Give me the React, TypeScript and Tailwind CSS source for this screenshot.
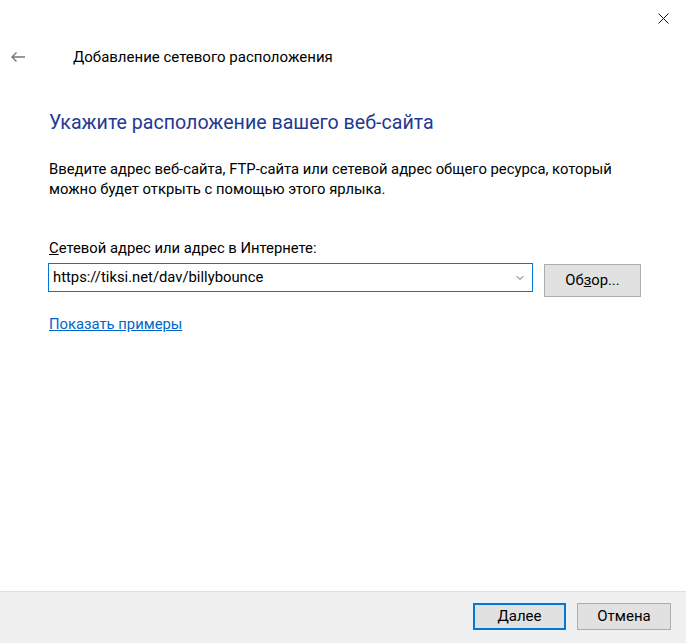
import { ChevronDown } from 'lucide-react';

function App() {
  return (
    <div className="relative flex h-[643px] w-[686px] flex-col bg-white font-['Roboto',sans-serif] text-black">
      <div className="flex h-9 justify-end">
        <div className="flex h-9 w-[46px] items-center justify-center">
          <svg width="11" height="11" viewBox="0 0 11 11" stroke="#111" strokeWidth="1">
            <path d="M0.5 0.5 L10.5 10.5 M10.5 0.5 L0.5 10.5" />
          </svg>
        </div>
      </div>

      <div className="flex h-[42px] items-center">
        <div className="ml-[10px] flex w-[63px] items-center">
          <svg width="16" height="12" viewBox="0 0 16 12" stroke="#777" strokeWidth="1.4" fill="none">
            <path d="M15 6 H2 M6.5 1.5 L2 6 L6.5 10.5" />
          </svg>
        </div>
        <span className="text-[15px] leading-5">Добавление сетевого расположения</span>
      </div>

      <div className="flex flex-col pl-[49px]">
        <h1 className="mt-[31px] text-[19.6px] leading-7 text-[#1f3a93]">
          Укажите расположение вашего веб-сайта
        </h1>
        <p className="mt-[22px] text-[14.8px] leading-5">
          Введите адрес веб-сайта, FTP-сайта или сетевой адрес общего ресурса, который
          <br />
          можно будет открыть с помощью этого ярлыка.
        </p>
        <div className="mt-[39px] text-[14.8px] leading-5">
          <span className="underline">С</span>етевой адрес или адрес в Интернете:
        </div>
        <div className="mt-[5px] flex h-[34px] items-start">
          <div className="-ml-px flex h-[29px] w-[485px] items-center border border-[#0078d7] pl-[4px] pr-[6px]">
            <span className="flex-1 text-[14.8px]">https://tiksi.net/dav/billybounce</span>
            <ChevronDown size={12} strokeWidth={1.6} color="#333" />
          </div>
          <button className="ml-[11px] mt-px h-[33px] w-[97px] border border-[#adadad] bg-[#e1e1e1] text-[14.8px]">
            Об<span className="underline">з</span>ор...
          </button>
        </div>
        <a className="mt-[17px] w-fit text-[14.8px] leading-5 text-[#0066cc] underline">Показать примеры</a>
      </div>

      <div className="flex-1" />

      <div className="flex h-[52px] justify-end gap-[11px] border-t border-[#dfdfdf] bg-[#f0f0f0] pr-[15px] pt-[11px]">
        <button className="h-[27px] w-[93px] border-2 border-[#0078d7] bg-[#e1e1e1] text-[15px]">
          <span className="underline">Д</span>алее
        </button>
        <button className="h-[27px] w-[94px] border border-[#adadad] bg-[#e1e1e1] text-[15px]">
          Отмена
        </button>
      </div>
    </div>
  );
}

export default App;
